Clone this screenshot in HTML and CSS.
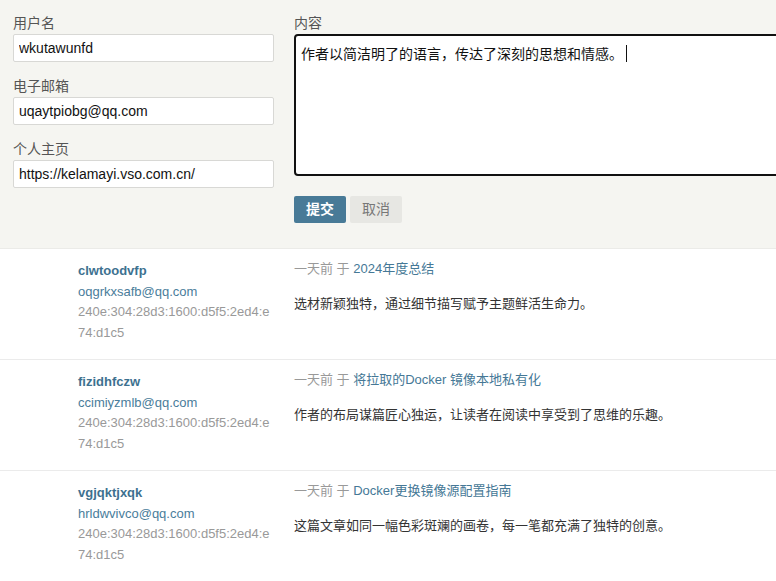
FILE: index.html
```html
<!DOCTYPE html>
<html lang="zh-CN">
<head>
    <meta charset="UTF-8">
    <meta name="viewport" content="width=device-width, initial-scale=1.0">
    <title>评论</title>
    <link rel="stylesheet" href="styles.css">
</head>
<body>
    <div class="comment-form">
        <div class="fields">
            <div class="field">
                <label>用户名</label>
                <input type="text" value="wkutawunfd">
            </div>
            <div class="field">
                <label>电子邮箱</label>
                <input type="text" value="uqaytpiobg@qq.com">
            </div>
            <div class="field">
                <label>个人主页</label>
                <input type="text" value="https://kelamayi.vso.com.cn/">
            </div>
        </div>
        <div class="content">
            <label>内容</label>
            <div class="textarea">作者以简洁明了的语言，传达了深刻的思想和情感。<span class="caret"></span></div>
            <div class="actions">
                <div class="btn primary">提交</div>
                <div class="btn">取消</div>
            </div>
        </div>
    </div>

    <div class="comments">
        <div class="comment">
            <div class="meta">
                <div class="name">clwtoodvfp</div>
                <div class="email">oqgrkxsafb@qq.com</div>
                <div class="ip">240e:304:28d3:1600:d5f5:2ed4:e74:d1c5</div>
            </div>
            <div class="body">
                <div class="when">一天前 于 <a href="#">2024年度总结</a></div>
                <p>选材新颖独特，通过细节描写赋予主题鲜活生命力。</p>
            </div>
        </div>
        <div class="comment">
            <div class="meta">
                <div class="name">fizidhfczw</div>
                <div class="email">ccimiyzmlb@qq.com</div>
                <div class="ip">240e:304:28d3:1600:d5f5:2ed4:e74:d1c5</div>
            </div>
            <div class="body">
                <div class="when">一天前 于 <a href="#">将拉取的Docker 镜像本地私有化</a></div>
                <p>作者的布局谋篇匠心独运，让读者在阅读中享受到了思维的乐趣。</p>
            </div>
        </div>
        <div class="comment">
            <div class="meta">
                <div class="name">vgjqktjxqk</div>
                <div class="email">hrldwvivco@qq.com</div>
                <div class="ip">240e:304:28d3:1600:d5f5:2ed4:e74:d1c5</div>
            </div>
            <div class="body">
                <div class="when">一天前 于 <a href="#">Docker更换镜像源配置指南</a></div>
                <p>这篇文章如同一幅色彩斑斓的画卷，每一笔都充满了独特的创意。</p>
            </div>
        </div>
    </div>
</body>
</html>
```

FILE: styles.css
```css
body {
  margin: 0;
  font-family: "Liberation Sans", Arial, "Noto Sans CJK SC", sans-serif;
  font-size: 13px;
  color: #333;
  background-color: #fff;
  overflow: hidden;
}

.comment-form {
  display: flex;
  gap: 20px;
  padding: 13px 0 25px 13px;
  background-color: #f5f5f1;
  border-bottom: 1px solid #ebebe8;
}

.fields {
  width: 261px;
  flex-shrink: 0;
}

.field {
  margin-bottom: 14px;
}

label {
  display: block;
  height: 21px;
  line-height: 20px;
  font-size: 14px;
  color: #555;
}

.field input {
  box-sizing: border-box;
  display: block;
  width: 261px;
  height: 28px;
  padding: 0 5px;
  border: 1px solid #d8d8d5;
  border-radius: 2px;
  background-color: #fff;
  font-family: inherit;
  font-size: 14px;
  color: #111;
  outline: none;
}

.content {
  flex-shrink: 0;
}

.textarea {
  box-sizing: border-box;
  width: 520px;
  height: 142px;
  padding: 8px 5px;
  border: 2px solid #111;
  border-radius: 4px;
  background-color: #fff;
  font-size: 14px;
  line-height: 20px;
  color: #111;
}

.caret {
  display: inline-block;
  width: 1px;
  height: 17px;
  margin-left: 3px;
  vertical-align: -3px;
  background-color: #111;
}

.actions {
  display: flex;
  gap: 4px;
  margin-top: 20px;
}

.btn {
  width: 52px;
  height: 27px;
  line-height: 27px;
  text-align: center;
  border-radius: 2px;
  font-size: 14px;
  color: #777;
  background-color: #e7e7e3;
}

.btn.primary {
  color: #fff;
  font-weight: bold;
  background-color: #487a97;
}

.comment {
  display: flex;
  gap: 20px;
  height: 110px;
  padding-left: 78px;
  border-bottom: 1px solid #ebebeb;
}

.meta {
  width: 196px;
  flex-shrink: 0;
  padding-top: 12px;
  line-height: 20.5px;
  word-break: break-all;
}

.name {
  font-weight: bold;
  color: #3d7190;
}

.email {
  color: #4a7d9b;
}

.ip {
  color: #999;
}

.body {
  padding-top: 10px;
  line-height: 20px;
}

.when {
  color: #999;
}

.when a {
  color: #457896;
  text-decoration: none;
}

.body p {
  margin: 15px 0 0;
  color: #333;
}
```
